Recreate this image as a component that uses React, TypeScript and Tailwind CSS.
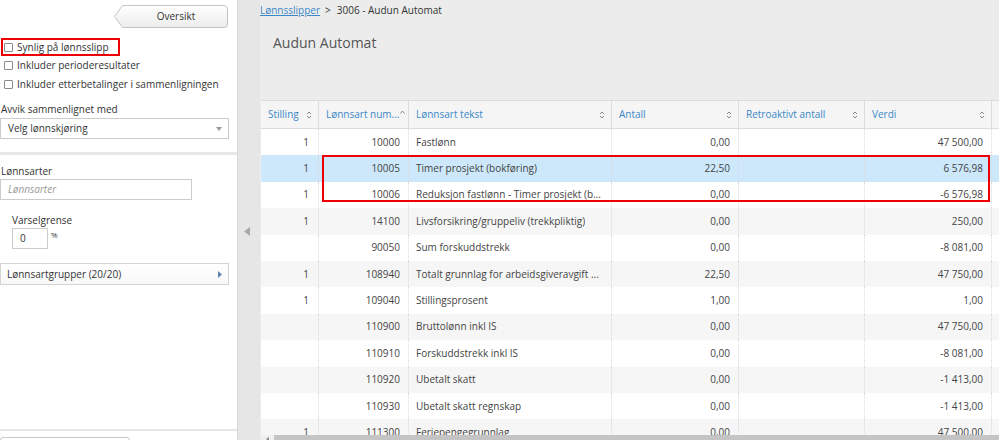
import React from 'react';

type Row = { s: string; n: string; t: string; a: string; v: string; sel?: boolean };

const rows: Row[] = [
  { s: '1', n: '10000', t: 'Fastlønn', a: '0,00', v: '47 500,00' },
  { s: '1', n: '10005', t: 'Timer prosjekt (bokføring)', a: '22,50', v: '6 576,98', sel: true },
  { s: '1', n: '10006', t: 'Reduksjon fastlønn - Timer prosjekt (b...', a: '0,00', v: '-6 576,98' },
  { s: '1', n: '14100', t: 'Livsforsikring/gruppeliv (trekkpliktig)', a: '0,00', v: '250,00' },
  { s: '', n: '90050', t: 'Sum forskuddstrekk', a: '0,00', v: '-8 081,00' },
  { s: '1', n: '108940', t: 'Totalt grunnlag for arbeidsgiveravgift ...', a: '22,50', v: '47 750,00' },
  { s: '1', n: '109040', t: 'Stillingsprosent', a: '1,00', v: '1,00' },
  { s: '', n: '110900', t: 'Bruttolønn inkl IS', a: '0,00', v: '47 750,00' },
  { s: '', n: '110910', t: 'Forskuddstrekk inkl IS', a: '0,00', v: '-8 081,00' },
  { s: '', n: '110920', t: 'Ubetalt skatt', a: '0,00', v: '-1 413,00' },
  { s: '', n: '110930', t: 'Ubetalt skatt regnskap', a: '0,00', v: '-1 413,00' },
  { s: '1', n: '111300', t: 'Feriepengegrunnlag', a: '0,00', v: '47 500,00' },
];

function SortIcon() {
  return (
    <svg width="6" height="10" viewBox="0 0 6 10" className="shrink-0">
      <path d="M1 4 L3 2 L5 4" fill="none" stroke="#8a8a8a" strokeWidth="1" />
      <path d="M1 6 L3 8 L5 6" fill="none" stroke="#8a8a8a" strokeWidth="1" />
    </svg>
  );
}

function Checkbox() {
  return <span className="w-[9px] h-[9px] border border-[#8a8a8a] rounded-[1px] bg-white shrink-0" />;
}

function Sidebar() {
  return (
    <div className="w-[237px] h-[440px] shrink-0 bg-white flex flex-col overflow-hidden text-[10px] text-[#333]">
      {/* Oversikt button */}
      <div className="self-end mr-[9px] mt-[5px] relative w-[114px] h-[23px] shrink-0 flex items-center justify-center pl-[10px]">
        <svg className="absolute inset-0" width="114" height="23" viewBox="0 0 114 23">
          <defs>
            <linearGradient id="btn" x1="0" y1="0" x2="0" y2="1">
              <stop offset="0" stopColor="#ffffff" />
              <stop offset="1" stopColor="#ececec" />
            </linearGradient>
          </defs>
          <path d="M8.5 0.5 H110 a3.5 3.5 0 0 1 3.5 3.5 V19 a3.5 3.5 0 0 1 -3.5 3.5 H8.5 L0.5 11.5 Z" fill="url(#btn)" stroke="#c4c4c4" />
        </svg>
        <span className="relative text-[10px] text-[#333]">Oversikt</span>
      </div>

      {/* Checkboxes */}
      <div className="mt-[10px] ml-[1px] self-start inline-flex items-center gap-[4px] h-[18px] border-2 border-[#ee0000] pl-px pr-[9px] shrink-0">
        <Checkbox />
        <span>Synlig på lønnsslipp</span>
      </div>
      <div className="flex items-center gap-[4px] h-[19px] pl-[4px] shrink-0 whitespace-nowrap">
        <Checkbox />
        <span>Inkluder perioderesultater</span>
      </div>
      <div className="flex items-center gap-[4px] h-[19px] pl-[4px] shrink-0 whitespace-nowrap">
        <Checkbox />
        <span>Inkluder etterbetalinger i sammenligningen</span>
      </div>

      <div className="mt-[7px] h-[16px] leading-[16px] pl-px shrink-0">Avvik sammenlignet med</div>
      <div className="mt-px w-[229px] h-[21px] border border-[#cccccc] flex items-center justify-between pl-[7px] pr-[6px] shrink-0">
        <span>Velg lønnskjøring</span>
        <svg width="6" height="4" viewBox="0 0 6 4">
          <path d="M0 0 H6 L3 4 Z" fill="#9a9a9a" />
        </svg>
      </div>

      <div className="mt-[13px] h-[3px] bg-[#e8e8e8] shrink-0" />

      <div className="mt-[8px] h-[16px] leading-[16px] pl-px shrink-0">Lønnsarter</div>
      <div className="w-[192px] h-[21px] border border-[#cccccc] flex items-center pl-[7px] shrink-0">
        <span className="italic text-[#9a9a9a]">Lønnsarter</span>
      </div>

      <div className="mt-[12px] h-[16px] leading-[16px] pl-[12px] shrink-0">Varselgrense</div>
      <div className="flex items-start ml-[12px] shrink-0">
        <div className="w-[36px] h-[21px] border border-[#cccccc] flex items-center pl-[7px]">
          <span>0</span>
        </div>
        <span className="ml-[3px] text-[8px] leading-[10px] mt-[2px]">%</span>
      </div>

      <div className="mt-[14px] w-[229px] h-[22px] border border-[#d4d4d4] bg-gradient-to-b from-white to-[#f8f8f8] flex items-center justify-between pl-[6px] pr-[6px] shrink-0">
        <span>Lønnsartgrupper (20/20)</span>
        <svg width="4" height="7" viewBox="0 0 4 7">
          <path d="M0 0 L4 3.5 L0 7 Z" fill="#5f88b0" />
        </svg>
      </div>

      <div className="mt-[144px] h-[2px] bg-[#e6e6e6] shrink-0" />
      <div className="mt-[6px] w-[130px] h-[24px] border border-[#c8c8c8] rounded-[3px] bg-white shrink-0" />
    </div>
  );
}

function Splitter() {
  return (
    <div className="w-[23px] h-[440px] shrink-0 bg-[#e6e6e6] border-l border-[#d8d8d8] flex justify-center pt-[227px] pr-[4px]">
      <svg width="6" height="9" viewBox="0 0 6 9">
        <path d="M6 0 V9 L0 4.5 Z" fill="#a8a8a8" />
      </svg>
    </div>
  );
}

function HeaderCell({ w, label, sorted }: { w: string; label: string; sorted?: boolean }) {
  return (
    <div className={`${w} h-full shrink-0 border-r border-[#dcdcdc] flex items-center pl-[7px] pr-[6px] ${sorted ? 'justify-start' : 'justify-between'}`}>
      <span className="whitespace-nowrap">{label}</span>
      {sorted ? (
        <svg width="5" height="4" viewBox="0 0 5 4" className="ml-px mb-[6px] shrink-0">
          <path d="M0.5 3.5 L2.5 1 L4.5 3.5" fill="none" stroke="#8a8a8a" strokeWidth="1" />
        </svg>
      ) : (
        <SortIcon />
      )}
    </div>
  );
}

function Table() {
  return (
    <div className="relative ml-px mt-[46px] w-[860px] h-[335px] shrink-0 overflow-hidden text-[10px]">
      <div className="flex h-[29px] bg-[#f5f5f5] border-y border-[#dcdcdc] text-[#3a88c7]">
        <HeaderCell w="w-[58px]" label="Stilling" />
        <HeaderCell w="w-[90px]" label="Lønnsart num..." sorted />
        <HeaderCell w="w-[203px]" label="Lønnsart tekst" />
        <HeaderCell w="w-[127px]" label="Antall" />
        <HeaderCell w="w-[126px]" label="Retroaktivt antall" />
        <HeaderCell w="w-[127px]" label="Verdi" />
        <div className="w-[129px] h-full shrink-0" />
      </div>
      {rows.map((r, i) => (
        <div
          key={r.n}
          className={`flex h-[26.4px] text-[#444] ${r.sel ? 'bg-[#cce8fa]' : i % 2 === 1 ? 'bg-[#f6f6f6]' : 'bg-white'}`}
        >
          <div className="w-[58px] shrink-0 border-r border-dotted border-[#dadada] flex items-center justify-end pr-[9px]">{r.s}</div>
          <div className="w-[90px] shrink-0 border-r border-dotted border-[#dadada] flex items-center justify-end pr-[8px]">{r.n}</div>
          <div className="w-[203px] shrink-0 border-r border-dotted border-[#dadada] flex items-center pl-[7px] pr-[6px]">
            <span className="truncate">{r.t}</span>
          </div>
          <div className="w-[127px] shrink-0 border-r border-dotted border-[#dadada] flex items-center justify-end pr-[8px]">{r.a}</div>
          <div className="w-[126px] shrink-0 border-r border-dotted border-[#dadada]" />
          <div className="w-[127px] shrink-0 border-r border-dotted border-[#dadada] flex items-center justify-end pr-[8px]">{r.v}</div>
          <div className="w-[129px] shrink-0" />
        </div>
      ))}
      {/* annotation */}
      <div className="absolute left-[61px] top-[55px] w-[668px] h-[47px] border-2 border-[#ee0000]" />
    </div>
  );
}

export default function App() {
  return (
    <div className="w-[999px] h-[440px] flex overflow-hidden font-['Open_Sans',sans-serif]">
      <Sidebar />
      <Splitter />
      <div className="flex-1 min-w-0 h-[440px] bg-[#ececec] flex flex-col overflow-hidden">
        <div className="h-[20px] shrink-0 flex items-center text-[10px] gap-[5px]">
          <span className="text-[#3a88c7] underline">Lønnsslipper </span>
          <span className="text-[#333]">&gt;</span>
          <span className="text-[#333] ml-px">3006 - Audun Automat</span>
        </div>
        <div className="mt-[12px] h-[22px] leading-[22px] shrink-0 pl-[13px] text-[14px] text-[#555]">Audun Automat</div>
        <Table />
        <div className="flex h-[17px] shrink-0 ml-px">
          <div className="w-[13px] bg-[#f0f0f0] flex items-start justify-center pt-[2px]">
            <svg width="3" height="4" viewBox="0 0 3 4">
              <path d="M3 0 V4 L0 2 Z" fill="#888" />
            </svg>
          </div>
          <div className="flex-1 bg-[#c4c4c4]" />
        </div>
      </div>
    </div>
  );
}
